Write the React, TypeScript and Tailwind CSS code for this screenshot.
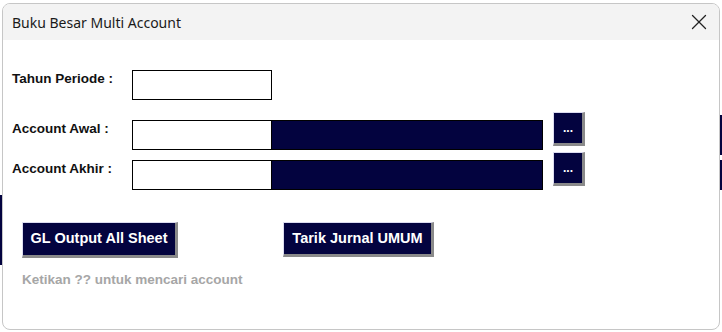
import { X } from 'lucide-react';

const label = "w-[120px] shrink-0 pt-[1px] text-[13.5px] font-bold leading-[16px] text-[#111]";
const navyBtn =
  "bg-[#03033f] text-white font-bold border-t border-l border-t-[#dcdcf0] border-l-[#dcdcf0] border-r-[3px] border-b-[3px] border-r-[#8a8a8a] border-b-[#8a8a8a]";

function AccountRow({ text }: { text: string }) {
  return (
    <div className="flex items-start">
      <div className={label}>{text}</div>
      <div className="flex h-[30px] w-[411px] border border-black">
        <div className="w-[138px] bg-white" />
        <div className="flex-1 bg-[#03033f] border-l border-black" />
      </div>
      <button className={`${navyBtn} ml-[10px] -mt-[8px] flex h-[34px] w-[32px] items-center justify-center text-[12px] leading-none`}>
        ...
      </button>
    </div>
  );
}

export default function App() {
  return (
    <div className="relative h-[332px] w-[722px] overflow-hidden bg-white" style={{ fontFamily: 'Tahoma, "Liberation Sans", sans-serif' }}>
      {/* bits of the sheet behind the dialog */}
      <div className="absolute right-0 top-[115px] h-[40px] w-[3px] bg-[#03033f]" />
      <div className="absolute right-0 top-[160px] h-[30px] w-[3px] bg-[#03033f]" />
      <div className="absolute left-0 top-[195px] h-[70px] w-[2px] bg-[#03033f]" />

      <div className="relative ml-[2px] mt-[3px] h-[327px] w-[718px] overflow-hidden rounded-[8px] border border-[#c6c6c6] bg-white">
        <div className="flex h-[36px] items-center justify-between bg-[#f3f3f3] pl-[9px] pr-[7px]">
          <span className="text-[14px] text-[#1a1a1a]" style={{ fontFamily: '"Noto Sans", "Open Sans", sans-serif' }}>
            Buku Besar Multi Account
          </span>
          <X className="h-[26px] w-[26px] text-[#222]" strokeWidth={1.2} />
        </div>

        <div className="flex flex-col pl-[9px] pt-[30px]">
          <div className="flex items-start">
            <div className={label}>Tahun Periode :</div>
            <div className="h-[30px] w-[140px] border border-black bg-white" />
          </div>
          <div className="mt-[20px] flex flex-col gap-[10px]">
            <AccountRow text="Account Awal :" />
            <AccountRow text="Account Akhir :" />
          </div>

          <div className="ml-[10px] mt-[32px] flex items-start">
            <button className={`${navyBtn} flex h-[36px] w-[156px] items-center justify-center text-[14.5px]`}>
              GL Output All Sheet
            </button>
            <button className={`${navyBtn} ml-[105px] flex h-[35px] w-[151px] items-center justify-center text-[14.5px]`}>
              Tarik Jurnal UMUM
            </button>
          </div>

          <div className="ml-[10px] mt-[14px] text-[13.5px] font-bold leading-[16px] text-[#a6a6a6]">
            Ketikan ?? untuk mencari account
          </div>
        </div>
      </div>
    </div>
  );
}
